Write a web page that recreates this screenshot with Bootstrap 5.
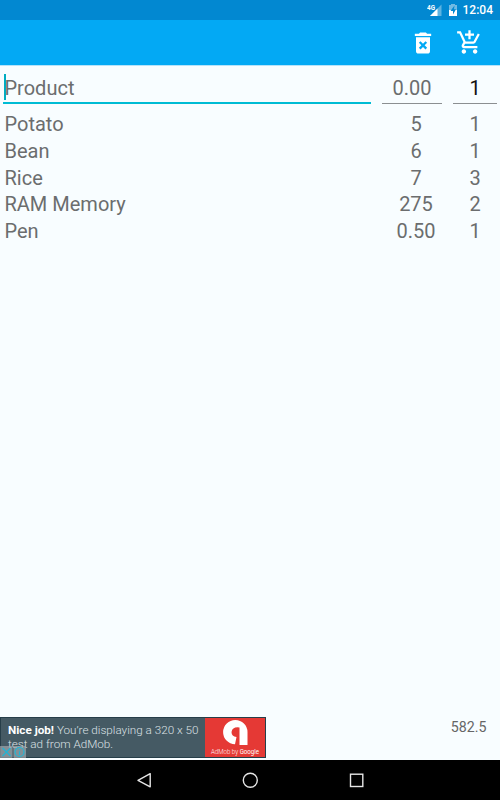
<!DOCTYPE html>
<html lang="en">
<head>
<meta charset="utf-8">
<meta name="viewport" content="width=device-width, initial-scale=1">
<title>Shopping list</title>
<link href="https://cdn.jsdelivr.net/npm/bootstrap@5.3.0/dist/css/bootstrap.min.css" rel="stylesheet">
<style>
body{font-family:Roboto,sans-serif;font-size:20px;line-height:26.8px;color:#6b6d6e;background:#f8fdff}
.screen{width:500px;height:800px}
.status{height:20px;background:#0288d1;font-size:12px;line-height:20px;padding-right:7px}
.appbar{height:46px;background:#03a9f4;border-bottom:1px solid #b5e3fa}
.trash{margin-right:19px}
.cart{margin-right:17px}
.entry{height:38px;padding-left:3px;padding-right:3px}
.field{border-bottom:1px solid #8b8f91;height:29px;line-height:27px}
.f-name{width:368px;margin-right:11px;height:30px;border-bottom:2px solid #00bcd4;padding-left:1.5px;line-height:29px}
.caret{left:1px;top:0;width:2px;height:26px;background:#00acc1}
.f-price{width:60px;margin-right:11px}
.f-qty{width:44px;color:#111}
.list-rows{padding-top:7px}
.item{height:26.8px;padding-left:4.5px;padding-right:3px}
.i-price{width:60px;margin-right:7px}
.i-qty{width:44px}
.total{font-size:14.2px;line-height:20px;padding:0 13.5px 0 0;color:#666}
.bottom{height:43px}
.ad{width:266px;height:41px;background:#455a64;border:1px solid #263e49}
.ad-text{width:204px;font-size:11.7px;line-height:14px;color:#dce1e4;padding:5px 0 0 7px;font-weight:300;white-space:nowrap}
.ad-text strong{font-weight:700;color:#fff}
.ad-logo{width:60px;background:#e53935}
.choices{left:-1px;bottom:-1px}
.nav-keys{height:40px;background:#000}
</style>
</head>
<body class="m-0">
<div class="screen d-flex flex-column overflow-hidden">
  <div class="status d-flex justify-content-end align-items-center text-white fw-medium flex-shrink-0">
    <svg width="36" height="20" viewBox="0 0 36 20">
      <text x="0" y="9.5" font-size="6.8" font-weight="700" fill="#fff" textLength="8" lengthAdjust="spacingAndGlyphs">4G</text>
      <path d="M14.5 4.5V16H3z" fill="#5eb3e1"/><path d="M10.5 8.5V16H3z" fill="#fff"/>
      <path d="M22 5h2V4h4v1h2v5h-8z" fill="#73bbe3"/>
      <path d="M22 10h8v6h-8z" fill="#fff"/><path d="M27.5 5.500L23.500 11H26v3.500L29 9.200h-2z" fill="#0288d1"/>
    </svg>
    <span class="clock">12:04</span>
  </div>
  <div class="appbar d-flex justify-content-end align-items-center flex-shrink-0">
    <svg class="trash d-block" width="28" height="28" viewBox="0 0 24 24" fill="#fff"><path fill-rule="evenodd" d="M6 19c0 1.100.9 2 2 2h8c1.100 0 2-.9 2-2V7H6v12zm2.460-7.120l1.410-1.410L12 12.590l2.120-2.120 1.410 1.410L13.410 14l2.120 2.120-1.410 1.410L12 15.410l-2.120 2.120-1.410-1.410L10.590 14l-2.130-2.120zM15.500 4l-1-1h-5l-1 1H5v2h14V4z"/></svg>
    <svg class="cart d-block" width="27" height="27" viewBox="0 0 24 24" fill="#fff"><path d="M11 9h2V6h3V4h-3V1h-2v3H8v2h3v3zm-4 9c-1.100 0-1.990.9-1.990 2S5.900 22 7 22s2-.9 2-2-.9-2-2-2zm10 0c-1.100 0-1.990.9-1.990 2s.89 2 1.990 2 2-.9 2-2-.9-2-2-2zm-9.830-3.250l.03-.12.9-1.630h7.450c.75 0 1.410-.41 1.750-1.030l3.860-7.010L19.420 4h-.01l-1.100 2-2.760 5H8.530l-.13-.27L6.160 6l-.95-2-.94-2H1v2h2l3.600 7.590-1.350 2.450c-.16.28-.25.61-.25.96 0 1.100.9 2 2 2h12v-2H7.420c-.13 0-.25-.11-.25-.25z"/></svg>
  </div>
  <main class="flex-grow-1 d-flex flex-column">
    <div class="entry d-flex align-items-end">
      <div class="field f-name position-relative"><span class="caret position-absolute"></span>Product</div>
      <div class="field f-price text-center">0.00</div>
      <div class="field f-qty text-center">1</div>
    </div>
    <div class="list-rows">
      <div class="item d-flex"><span class="flex-grow-1">Potato</span><span class="i-price text-center">5</span><span class="i-qty text-center">1</span></div>
      <div class="item d-flex"><span class="flex-grow-1">Bean</span><span class="i-price text-center">6</span><span class="i-qty text-center">1</span></div>
      <div class="item d-flex"><span class="flex-grow-1">Rice</span><span class="i-price text-center">7</span><span class="i-qty text-center">3</span></div>
      <div class="item d-flex"><span class="flex-grow-1">RAM Memory</span><span class="i-price text-center">275</span><span class="i-qty text-center">2</span></div>
      <div class="item d-flex"><span class="flex-grow-1">Pen</span><span class="i-price text-center">0.50</span><span class="i-qty text-center">1</span></div>
    </div>
    <div class="bottom mt-auto d-flex justify-content-between align-items-start">
      <div class="ad d-flex position-relative">
        <div class="ad-text"><strong>Nice job!</strong> You’re displaying a 320 x 50<br>test ad from AdMob.</div>
        <div class="ad-logo">
          <svg class="d-block" width="60" height="39" viewBox="0 0 60 39">
            <path d="M30 26.300A12.200 12.200 0 1 1 42.500 14V27H34.500V9.500Q27.500 8.500 26.500 14Q26.500 18.500 31.500 19z" fill="#fff"/>
            <text x="6" y="35.500" font-size="6.300" font-weight="300" fill="#fff" textLength="48" lengthAdjust="spacingAndGlyphs">AdMob by <tspan font-weight="400">Google</tspan></text>
          </svg>
        </div>
        <svg class="choices position-absolute" width="26" height="12" viewBox="0 0 26 12"><path d="M0 0h12.500v12H0zM13.500 0H26v12H13.500z" fill="#a6aeb2" opacity=".65"/><g fill="none" stroke="#20b5d5" stroke-width="1.200"><path d="M2.500 2l8 8m0-8l-8 8"/><circle cx="19.500" cy="6" r="4.500"/><path d="M19.500 5.200V9M19.500 3v1.200"/></g></svg>
      </div>
      <div class="total">582.5</div>
    </div>
  </main>
  <div class="nav-keys flex-shrink-0">
    <svg class="d-block" width="500" height="40" viewBox="0 0 500 40" fill="none" stroke="#e6e6e6" stroke-width="1.400"><path d="M150.200 13.700v13.100L138 20.300z" stroke-linejoin="round"/><circle cx="250.300" cy="20.300" r="7"/><rect x="350.500" y="14.200" width="12.300" height="12.300"/></svg>
  </div>
</div>
<script src="https://cdn.jsdelivr.net/npm/bootstrap@5.3.0/dist/js/bootstrap.bundle.min.js"></script>
</body>
</html>
